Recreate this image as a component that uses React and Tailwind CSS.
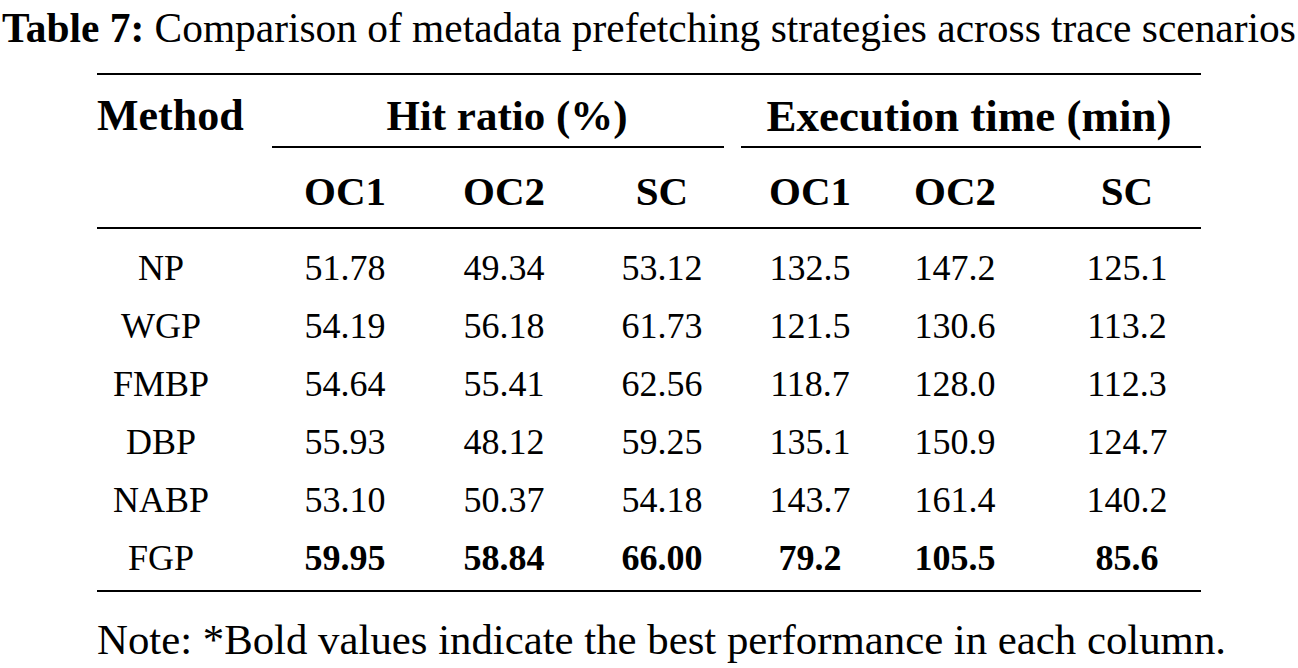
import React from "react";

const rows = [
  ["NP", "51.78", "49.34", "53.12", "132.5", "147.2", "125.1"],
  ["WGP", "54.19", "56.18", "61.73", "121.5", "130.6", "113.2"],
  ["FMBP", "54.64", "55.41", "62.56", "118.7", "128.0", "112.3"],
  ["DBP", "55.93", "48.12", "59.25", "135.1", "150.9", "124.7"],
  ["NABP", "53.10", "50.37", "54.18", "143.7", "161.4", "140.2"],
];
const best = ["FGP", "59.95", "58.84", "66.00", "79.2", "105.5", "85.6"];

const cellPad = [
  "pr-[28px]",
  "pl-[12px]",
  "",
  "pl-[4px]",
  "",
  "pr-[14px]",
  "pl-[12px]",
];

function Row({ data, boldNums }) {
  return (
    <div className="grid grid-cols-[156px_172px_158px_154px_146px_158px_160px] h-[58px] leading-[58px] text-[36px]">
      {data.map((v, i) => (
        <div
          key={i}
          className={`flex justify-center whitespace-nowrap ${cellPad[i]} ${
            boldNums && i > 0 ? "font-bold" : ""
          }`}
        >
          {v}
        </div>
      ))}
    </div>
  );
}

export default function App() {
  return (
    <div
      className="w-[1298px] h-[668px] bg-white text-black overflow-hidden"
      style={{ fontFamily: '"Liberation Serif", "Times New Roman", serif' }}
    >
      <div className="h-[73px] pt-[4px] pl-[2px] text-[41.4px] leading-[48px] whitespace-nowrap">
        <span className="font-bold">Table 7:</span>
        {"  "}Comparison of metadata prefetching strategies across trace scenarios
      </div>
      <div className="ml-[97px] w-[1104px]">
        <div className="border-t-2 border-black" />
        {/* header row 1 */}
        <div className="flex h-[73px] font-bold">
          <div className="w-[156px] pt-[17px] text-[44px] leading-[48px] whitespace-nowrap">Method</div>
          <div className="w-[484px] flex flex-col">
            <div className="pt-[17px] pl-[24px] text-[43px] leading-[48px] text-center whitespace-nowrap">
              Hit ratio (%)
            </div>
            <div className="mt-auto ml-[19px] mr-[13px] border-t-2 border-black" />
          </div>
          <div className="w-[464px] flex flex-col">
            <div className="pt-[17px] text-[45px] leading-[48px] text-center whitespace-nowrap">
              Execution time (min)
            </div>
            <div className="mt-auto ml-[4px] border-t-2 border-black" />
          </div>
        </div>
        {/* header row 2 */}
        <div className="grid grid-cols-[156px_172px_158px_154px_146px_158px_160px] h-[79px] pt-[19px] text-[41px] leading-[48px] font-bold">
          {["", "OC1", "OC2", "SC", "OC1", "OC2", "SC"].map((v, i) => (
            <div key={i} className={`flex justify-center ${cellPad[i]}`}>
              {v}
            </div>
          ))}
        </div>
        <div className="border-t-2 border-black" />
        <div className="pt-[10px] pb-[3px]">
          {rows.map((r, i) => (
            <Row key={i} data={r} />
          ))}
          <Row data={best} boldNums />
        </div>
        <div className="border-t-2 border-black" />
        <div className="pt-[24px] text-[42.8px] leading-[48px] whitespace-nowrap">
          Note: *Bold values indicate the best performance in each column.
        </div>
      </div>
    </div>
  );
}
